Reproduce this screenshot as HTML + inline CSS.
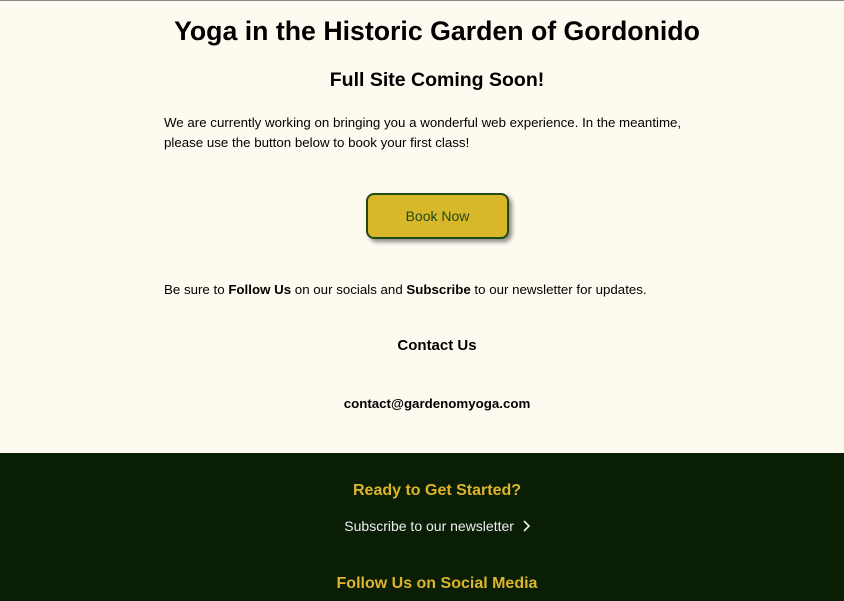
<!DOCTYPE html>
<html><head><style>
body{margin:0;width:844px;height:600px;overflow:hidden;background:#fffaf0;font-family:"Liberation Sans",sans-serif;color:#000;border-top:1px solid #888;box-sizing:border-box;position:relative}
.a{position:absolute;left:15px;width:844px;text-align:center;white-space:nowrap}
h1{margin:0;font-size:26.7px;font-weight:bold}
.p{position:absolute;left:164px;font-size:13.3px;line-height:20px;width:540px}
.btn{position:absolute;left:366px;top:192px;width:143px;height:46px;box-sizing:border-box;background:#d9b72b;border:2px solid #1f4a12;border-radius:8px;box-shadow:3px 3px 4px rgba(0,0,0,.45);color:#1f4a12;font-size:14px;text-align:center;line-height:42px}
footer{position:absolute;left:0;top:452px;width:844px;height:148px;background:#0a1d05}
.y{color:#dcb52a;font-weight:bold;font-size:16px}
</style></head><body>
<div class="a" style="top:15px"><h1>Yoga in the Historic Garden of Gordonido</h1></div>
<div class="a" style="top:68px;font-size:19.5px;font-weight:bold">Full Site Coming Soon!</div>
<div class="p" style="top:112px">We are currently working on bringing you a wonderful web experience. In the meantime, please use the button below to book your first class!</div>
<div class="btn">Book Now</div>
<div class="p" style="top:279px;width:600px">Be sure to <b>Follow Us</b> on our socials and <b>Subscribe</b> to our newsletter for updates.</div>
<div class="a" style="top:336px;font-size:15px;font-weight:bold">Contact Us</div>
<div class="a" style="top:395px;font-size:13.3px;font-weight:bold">contact@gardenomyoga.com</div>
<footer>
<div class="a y" style="top:29px">Ready to Get Started?</div>
<div class="a" style="top:65px;color:#eee;font-size:14px">Subscribe to our newsletter &nbsp;<svg width="8" height="12" viewBox="0 0 8 12" style="vertical-align:-1px"><path d="M2 1l5 5-5 5" fill="none" stroke="#eee" stroke-width="1.6"/></svg></div>
<div class="a y" style="top:122px">Follow Us on Social Media</div>
</footer>
</body></html>
